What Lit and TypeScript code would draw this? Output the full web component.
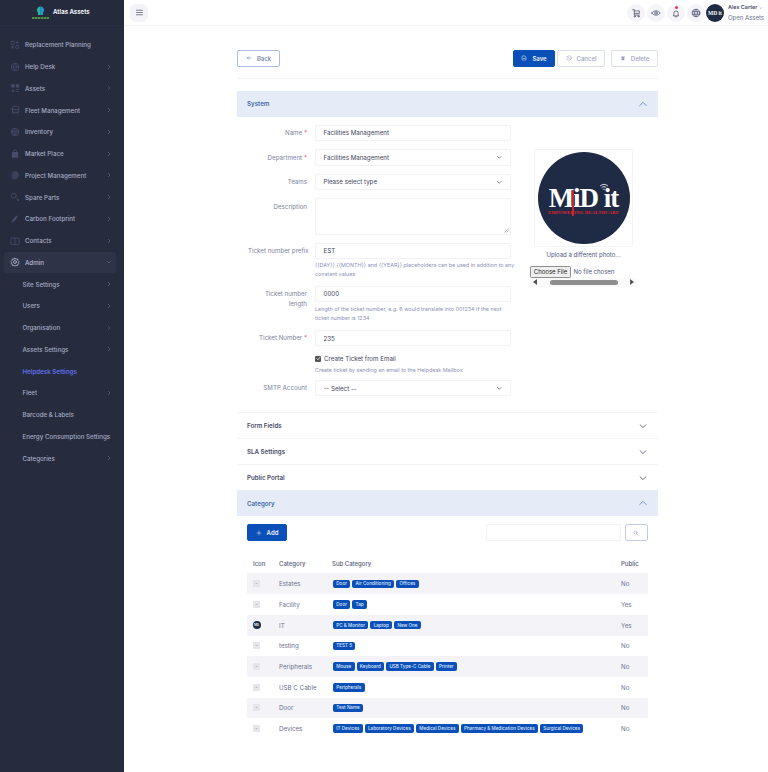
import { LitElement, html, css, svg } from 'lit';
import { customElement } from 'lit/decorators.js';

const ICONS: Record<string, unknown> = {
  planning: svg`<rect x="3" y="3" width="7" height="8" rx="2"/><rect x="14" y="13" width="7" height="8" rx="2"/><path d="M14 6h7M17 3v6M3 17h7M6 14v6"/>`,
  help: svg`<circle cx="12" cy="12" r="9"/><path d="M3 12h18M12 3c-5 5-5 13 0 18M12 3c5 5 5 13 0 18"/>`,
  assets: svg`<g fill="currentColor" stroke="none"><rect x="3" y="3" width="8" height="8" rx="1"/><rect x="14" y="3" width="8" height="8" rx="1"/><path d="M7 14l4 7H3zM14 15h8v2h-8zM14 19h8v2h-8z"/></g>`,
  fleet: svg`<path d="M6 18V6a3 3 0 0 1 3-3h9a3 3 0 0 1 3 3v10a2 2 0 0 1-2 2z" /><path d="M2 10h4M6 11h15"/><circle cx="9" cy="18" r="2"/><circle cx="18" cy="18" r="2"/>`,
  inventory: svg`<circle cx="12" cy="12" r="9"/><path d="M7 9l5-3 5 3v6l-5 3-5-3zM7 9l5 3 5-3M12 12v6"/>`,
  market: svg`<path fill="currentColor" stroke="none" d="M5 7h14l1 14H4z"/><path d="M8 9V6a4 4 0 0 1 8 0v3"/>`,
  project: svg`<path fill="currentColor" stroke="none" d="M9 3h7l5 5v9a2 2 0 0 1-2 2H9a2 2 0 0 1-2-2V5a2 2 0 0 1 2-2z" opacity=".7"/><path d="M5 7v12a2 2 0 0 0 2 2h9"/>`,
  spare: svg`<circle cx="9" cy="9" r="6"/><path d="M13 13l8 8M17 21l4-4"/>`,
  carbon: svg`<path fill="currentColor" stroke="none" d="M20 3c-8 2-14 8-16 17l1 1C9 18 17 12 20 3z"/>`,
  contacts: svg`<rect x="2" y="5" width="20" height="15" rx="1"/><path d="M12 5v15"/>`,
  admin: svg`<circle cx="12" cy="12" r="3.500"/><path d="M12 3l2.500 2 3.500-.5 1 3.500 2.500 2.500-1.500 2.500 1.500 2.500-2.500 1.500-1 3.500-3.500-.5-2.500 2-2.500-2-3.500.5-1-3.500-2.500-1.500 1.500-2.500-1.500-2.500 2.500-2.500 1-3.500 3.500.5z"/>`,
  cart: svg`<path d="M4 4h4v13h12M8 7h12v6H8"/><circle cx="9" cy="20" r="1.500"/><circle cx="18" cy="20" r="1.500"/>`,
  eye: svg`<path d="M2 12c4-7 16-7 20 0-4 7-16 7-20 0z"/><circle cx="12" cy="12" r="3"/>`,
  bell: svg`<path d="M6 18c1-2 1-3 1-6a5 5 0 0 1 10 0c0 3 0 4 1 6zM10 21h4"/>`,
  globe: svg`<circle cx="12" cy="12" r="9"/><path d="M3 9h18M3 15h18M12 3c-5 5-5 13 0 18M12 3c5 5 5 13 0 18"/>`,
  menu: svg`<path d="M4 6h16M4 12h16M4 18h16"/>`,
  back: svg`<path d="M20 12H5M10 7l-5 5 5 5"/>`,
  save: svg`<path d="M4 5a1 1 0 0 1 1-1h11l4 4v11a1 1 0 0 1-1 1H5a1 1 0 0 1-1-1z"/><path d="M8 14h8"/>`,
  cancel: svg`<circle cx="12" cy="12" r="9"/><path d="M6 6l12 12"/>`,
  trash: svg`<path fill="currentColor" stroke="none" d="M6 8h12l-1 13H7zM4 4h16v2H4z"/>`,
  plus: svg`<path d="M12 4v16M4 12h16"/>`,
  search: svg`<circle cx="10" cy="10" r="6"/><path d="M15 15l6 6"/>`,
  right: svg`<path d="M9 5l7 7-7 7"/>`,
  down: svg`<path d="M5 9l7 7 7-7"/>`,
  up: svg`<path d="M4 16l8-8 8 8"/>`,
  check: svg`<path d="M5 13l4 5L19 6"/>`,
};

const icon = (name: string, cls = '') =>
  html`<svg class="icon ${cls}" viewBox="0 0 24 24" fill="none" stroke="currentColor" stroke-width="2" stroke-linecap="round" stroke-linejoin="round">${ICONS[name]}</svg>`;

const NAV = [
  { label: 'Replacement Planning', icon: 'planning' },
  { label: 'Help Desk', icon: 'help', more: true },
  { label: 'Assets', icon: 'assets', more: true },
  { label: 'Fleet Management', icon: 'fleet', more: true },
  { label: 'Inventory', icon: 'inventory', more: true },
  { label: 'Market Place', icon: 'market', more: true },
  { label: 'Project Management', icon: 'project', more: true },
  { label: 'Spare Parts', icon: 'spare', more: true },
  { label: 'Carbon Footprint', icon: 'carbon', more: true },
  { label: 'Contacts', icon: 'contacts', more: true },
];

const SUBNAV = [
  { label: 'Site Settings', more: true },
  { label: 'Users', more: true },
  { label: 'Organisation', more: true },
  { label: 'Assets Settings', more: true },
  { label: 'Helpdesk Settings', active: true },
  { label: 'Fleet', more: true },
  { label: 'Barcode & Labels' },
  { label: 'Energy Consumption Settings' },
  { label: 'Categories', more: true },
];

const CATEGORIES = [
  { name: 'Estates', subs: ['Door', 'Air Conditioning', 'Offices'], pub: 'No' },
  { name: 'Facility', subs: ['Door', 'Tap'], pub: 'Yes' },
  { name: 'IT', subs: ['PC & Monitor', 'Laptop', 'New One'], pub: 'Yes', logo: true },
  { name: 'testing', subs: ['TEST 5'], pub: 'No' },
  { name: 'Peripherals', subs: ['Mouse', 'Keyboard', 'USB Type-C Cable', 'Printer'], pub: 'No' },
  { name: 'USB C Cable', subs: ['Peripherals'], pub: 'No' },
  { name: 'Door', subs: ['Test Name'], pub: 'No' },
  { name: 'Devices', subs: ['IT Devices', 'Laboratory Devices', 'Medical Devices', 'Pharmacy & Medication Devices', 'Surgical Devices'], pub: 'No' },
];

@customElement('app-root')
export class AppRoot extends LitElement {
  static styles = css`
    :host {
      display: grid;
      grid-template-columns: 124px 1fr;
      height: 772px;
      font-family: Inter, 'Liberation Sans', sans-serif;
      font-size: 6.2px;
      color: #4b4f6b;
      background: #fff;
      overflow: hidden;
    }
    .icon { width: 10px; height: 10px; flex: none; display: block; }

    /* sidebar */
    .sidebar { background: #262b3e; color: #a5abc4; }
    .brand {
      height: 26px;
      box-sizing: border-box;
      display: flex;
      align-items: center;
      padding: 0 0 2px 30px;
      gap: 2px;
      color: #eef0f6;
      font-weight: 700;
      font-size: 6px;
      background: #252a3c;
      border-bottom: 1px solid #2a2f43;
    }
    .brand svg { width: 21px; height: 14px; margin-top: 2px; }
    .nav { padding-top: 8px; }
    .item {
      height: 21.75px;
      margin: 0 8px 0 4px;
      display: flex;
      align-items: center;
      padding-left: 6px;
      font-weight: 500;
      border-radius: 3px;
    }
    .item .icon:first-child { width: 10px; height: 10px; margin-right: 5px; color: #464c6a; }
    .item .arrow { width: 6px; height: 6px; margin-left: auto; margin-right: 4px; color: #7a809c; }
    .item.open { background: #2e3347; color: #b8bdd2; }
    .item.open .icon:first-child { color: #b4b9cf; }
    .item.sub { padding-left: 18.5px; }
    .item.active { color: #5d6ee6; font-weight: 600; }

    /* topbar */
    .main { display: flex; flex-direction: column; min-width: 0; }
    .topbar {
      height: 26px;
      box-sizing: border-box;
      display: flex;
      align-items: center;
      padding: 0 4px 0 6px;
      border-bottom: 1px solid #f1f1f6;
    }
    .menu { width: 18px; height: 18px; border-radius: 6px; background: #f3f3f8; display: grid; place-items: center; color: #555a75; }
    .menu .icon { width: 9px; height: 9px; }
    .tools { margin-left: auto; display: flex; align-items: center; gap: 2px; }
    .round { width: 18px; height: 18px; border-radius: 50%; background: #f5f5f9; display: grid; place-items: center; color: #555a75; position: relative; }
    .round .icon { width: 10px; height: 10px; }
    .dot { position: absolute; top: 2.500px; left: 7.500px; width: 3px; height: 3px; border-radius: 50%; background: #f0334f; }
    .avatar { width: 18px; height: 18px; border-radius: 50%; background: #1f2a44; color: #fff; font: 700 5.500px 'Liberation Serif', serif; display: grid; place-items: center; overflow: hidden; margin-left: -1px; white-space: nowrap; }
    .who { margin-left: 2px; line-height: 9.500px; width: 36px; }
    .who b { font-weight: 600; font-size: 5.400px; color: #4b4f6b; display: flex; align-items: center; gap: 2px; }
    .who b .icon { width: 4px; height: 4px; }
    .who span { font-size: 6px; color: #6c7190; white-space: nowrap; }

    /* page */
    .page { width: 421px; margin: 0 0 0 113px; padding-top: 23.500px; }
    .actions { display: flex; gap: 2px; padding-bottom: 11px; border-bottom: 1px solid #f1f1f6; margin-bottom: 12px; }
    .btn {
      height: 17px;
      box-sizing: border-box;
      border: 1px solid #c9d3ea;
      border-radius: 2px;
      display: inline-flex;
      align-items: center;
      justify-content: center;
      gap: 5px;
      font-size: 6px;
      font-weight: 500;
      color: #9a9fbb;
      background: #fff;
    }
    .btn .icon { width: 6px; height: 6px; }
    .btn.back { width: 43px; color: #6d7ba6; border-color: #a9bde0; margin-right: auto; }
    .btn.back .icon { color: #3f68b4; }
    .btn.save { width: 42px; background: #0b4fb8; border-color: #0b4fb8; color: #eef3fb; font-weight: 600; }
    .btn.cancel { width: 48px; border-color: #dcdfee; }
    .btn.delete { width: 47px; margin-left: 4px; border-color: #dcdfee; }
    .btn.add { width: 40px; background: #0b4fb8; border-color: #0b4fb8; color: #eef3fb; font-weight: 600; }
    .btn.find { width: 23.500px; border-color: #c2cce6; color: #8f99bf; }

    .acc {
      height: 26px;
      box-sizing: border-box;
      display: flex;
      align-items: center;
      justify-content: space-between;
      padding: 0 10px;
      font-weight: 600;
      font-size: 6.200px;
      color: #474b68;
      border-top: 1px solid #f3f3f8;
    }
    .acc .icon { width: 10px; height: 10px; stroke-width: 2; color: #50577f; }
    .acc.open { background: #e6ecf7; color: #4468a8; border-top: 0; }
    .acc.open .icon { color: #5a7fbe; }

    /* form */
    .system { display: flex; padding: 8px 0 16px 11px; }
    .form { width: 263px; display: flex; flex-direction: column; gap: 8px; }
    .row { display: grid; grid-template-columns: 59px 196px; column-gap: 8px; }
    .label { text-align: right; color: #7d82a0; line-height: 9.500px; padding-top: 3.500px; white-space: nowrap; }
    .label i { color: #ef4a5f; font-style: normal; }
    .field {
      height: 16.500px;
      box-sizing: border-box;
      border: 1px solid #f1f1f6;
      border-radius: 2px;
      display: flex;
      align-items: center;
      justify-content: space-between;
      padding: 0 7.500px;
      color: #3f4360;
      background: #fff;
    }
    .field .icon { width: 6.500px; height: 6.500px; stroke-width: 2.500; color: #50577f; }
    .area { height: 36.500px; position: relative; }
    .grip { position: absolute; right: 1px; bottom: 1px; width: 5px; height: 5px; color: #777; }
    .help { grid-column: 2; color: #8d92b8; font-size: 5.400px; line-height: 9.600px; margin-top: 1.500px; margin-bottom: -2px; }
    .help.two { margin-top: -3.500px; }
    .help.mail { margin-top: 1.500px; margin-bottom: -3.500px; }
    .nowrap { white-space: nowrap; }
    .check { grid-column: 2; display: flex; align-items: center; gap: 3px; height: 11px; margin-top: -1px; color: #3f4360; }
    .box { width: 6px; height: 6px; background: #555; border-radius: 1px; display: grid; place-items: center; color: #fff; }
    .box .icon { width: 5px; height: 5px; stroke-width: 3.500; }

    .photo { margin-left: 19px; width: 107px; display: flex; flex-direction: column; padding-top: 24px; }
    .frame { width: 99px; height: 98px; margin-left: 4px; box-sizing: border-box; border: 1px solid #f3f3f8; border-radius: 2px; display: grid; place-items: center; }
    .logo { width: 92px; height: 92px; box-sizing: border-box; padding-top: 6px; border-radius: 50%; background: #1f2a44; color: #fff; display: flex; flex-direction: column; align-items: center; justify-content: center; position: relative; }
    .logo b { font: 700 27px/24px 'Liberation Serif', serif; letter-spacing: -1px; }
    .logo small { font: 700 4.600px/6px 'Liberation Serif', serif; color: #e0262c; letter-spacing: .2px; white-space: nowrap; }
    .logo svg { position: absolute; top: 31px; right: 21px; width: 10px; height: 8px; color: #fff; }
    .logo .rod { position: absolute; left: 34px; top: 38px; width: 2px; height: 26px; background: #d2232a; }
    .caption { text-align: center; margin-top: 4.500px; color: #4f5680; font-size: 6px; line-height: 8px; }
    .file { display: flex; align-items: center; gap: 2.500px; margin-top: 6.500px; font-size: 6px; color: #4f5680; }
    .choose { width: 41px; height: 12px; box-sizing: border-box; background: #efefef; border: 1px solid #8f8f8f; border-radius: 1.500px; color: #222; display: grid; place-items: center; }
    .bar { height: 9px; background: #fafafa; display: flex; align-items: center; justify-content: space-between; padding: 0 3px; color: #555; }
    .thumb { width: 68px; height: 5px; border-radius: 3px; background: #8e8e8e; }
    .tri-l { width: 0; height: 0; border: 3px solid transparent; border-right: 4px solid #555; border-left: 0; }
    .tri-r { width: 0; height: 0; border: 3px solid transparent; border-left: 4px solid #555; border-right: 0; }

    /* category */
    .category { padding: 8px 10px 0; }
    .tools-row { display: flex; align-items: center; }
    .search { width: 135px; height: 17px; box-sizing: border-box; border: 1px solid #f1f1f6; border-radius: 2px; margin-left: auto; margin-right: 3.500px; }
    .cols { display: grid; grid-template-columns: 32px 53px 289px 27px; align-items: center; }
    .head { height: 32px; padding-top: 12px; box-sizing: border-box; color: #555a78; font-weight: 500; font-size: 6px; }
    .head span:first-child, .line > :first-child { padding-left: 6px; }
    .line { height: 20.700px; color: #6b708e; }
    .line:nth-child(odd) { background: #f3f3f8; }
    .blank { width: 7px; height: 7px; background: #e6e6ea; display: grid; place-items: center; color: #777; font-size: 5px; line-height: 1; }
    .mini { width: 8px; height: 8px; border-radius: 50%; background: #1f2a44; color: #fff; font: 700 3px 'Liberation Serif', serif; display: grid; place-items: center; margin-left: -.500px; }
    .badges { display: flex; gap: 2px; padding-left: 1px; }
    .badge { height: 8.500px; padding: 0 3.300px; display: flex; align-items: center; background: #0b4fb8; color: #dfe8f8; border-radius: 2px; font-size: 4.600px; font-weight: 500; white-space: nowrap; }
  `;

  render() {
    return html`
      <aside class="sidebar">
        <div class="brand">
          <svg viewBox="0 0 42 28">
            <path d="M21 1a7 7 0 0 1 5 12v5h-5z" fill="#1f9bd0"/>
            <path d="M21 1a7 7 0 0 0-5 12v5h5z" fill="#22b6a0"/>
            <path d="M4 24h34" stroke="#5fb548" stroke-width="3" stroke-dasharray="5 1"/>
          </svg>
          <span>Atlas Assets</span>
        </div>
        <nav class="nav">
          ${NAV.map((n) => html`
            <div class="item">${icon(n.icon)}<span>${n.label}</span>${n.more ? icon('right', 'arrow') : ''}</div>
          `)}
          <div class="item open">${icon('admin')}<span>Admin</span>${icon('down', 'arrow')}</div>
          ${SUBNAV.map((n) => html`
            <div class="item sub ${n.active ? 'active' : ''}"><span>${n.label}</span>${n.more ? icon('right', 'arrow') : ''}</div>
          `)}
        </nav>
      </aside>
      <div class="main">
        <header class="topbar">
          <div class="menu">${icon('menu')}</div>
          <div class="tools">
            <div class="round">${icon('cart')}</div>
            <div class="round">${icon('eye')}</div>
            <div class="round">${icon('bell')}<span class="dot"></span></div>
            <div class="round">${icon('globe')}</div>
            <div class="avatar">MD it</div>
            <div class="who"><b>Alex Carter ${icon('down')}</b><span>Open Assets</span></div>
          </div>
        </header>
        <div class="page">
          <div class="actions">
            <div class="btn back">${icon('back')}Back</div>
            <div class="btn save">${icon('save')}Save</div>
            <div class="btn cancel">${icon('cancel')}Cancel</div>
            <div class="btn delete">${icon('trash')}Delete</div>
          </div>
          <div class="acc open">System ${icon('up')}</div>
          <div class="system">
            ${this.renderForm()}
            ${this.renderPhoto()}
          </div>
          <div class="acc">Form Fields ${icon('down')}</div>
          <div class="acc">SLA Settings ${icon('down')}</div>
          <div class="acc">Public Portal ${icon('down')}</div>
          <div class="acc open">Category ${icon('up')}</div>
          <div class="category">
            <div class="tools-row">
              <div class="btn add">${icon('plus')}Add</div>
              <div class="search"></div>
              <div class="btn find">${icon('search')}</div>
            </div>
            <div class="cols head"><span>Icon</span><span>Category</span><span>Sub Category</span><span>Public</span></div>
            <div>
              ${CATEGORIES.map((c) => html`
                <div class="cols line">
                  <div>${c.logo ? html`<div class="mini">MD</div>` : html`<div class="blank">-</div>`}</div>
                  <div>${c.name}</div>
                  <div class="badges">${c.subs.map((s) => html`<span class="badge">${s}</span>`)}</div>
                  <div>${c.pub}</div>
                </div>
              `)}
            </div>
          </div>
        </div>
      </div>
    `;
  }

  private renderForm() {
    return html`
      <div class="form">
        <div class="row"><div class="label">Name <i>*</i></div><div class="field">Facilities Management</div></div>
        <div class="row"><div class="label">Department <i>*</i></div><div class="field">Facilities Management ${icon('down')}</div></div>
        <div class="row"><div class="label">Teams</div><div class="field">Please select type ${icon('down')}</div></div>
        <div class="row">
          <div class="label">Description</div>
          <div class="field area"><svg class="grip" viewBox="0 0 10 10" stroke="currentColor" fill="none"><path d="M1 9l8-8M5 9l4-4"/></svg></div>
        </div>
        <div class="row">
          <div class="label">Ticket number prefix</div><div class="field">EST</div>
          <div class="help nowrap">{{DAY}} {{MONTH}} and {{YEAR}} placeholders can be used in addition to any<br />constant values</div>
        </div>
        <div class="row">
          <div class="label">Ticket number<br />length</div>
          <div class="field">0000</div>
          <div class="help two">Length of the ticket number, e.g. 6 would translate into 001234 if the next ticket number is 1234</div>
        </div>
        <div class="row"><div class="label">Ticket Number <i>*</i></div><div class="field">235</div></div>
        <div class="row">
          <div class="check"><span class="box">${icon('check')}</span>Create Ticket from Email</div>
          <div class="help mail">Create ticket by sending an email to the Helpdesk Mailbox</div>
        </div>
        <div class="row"><div class="label">SMTP Account</div><div class="field">-- Select -- ${icon('down')}</div></div>
      </div>
    `;
  }

  private renderPhoto() {
    return html`
      <div class="photo">
        <div class="frame">
          <div class="logo">
            <b>MiD it</b>
            <small>EMPOWERING HEALTHCARE</small>
            <span class="rod"></span>
            <svg viewBox="0 0 24 20" fill="none" stroke="currentColor" stroke-width="2"><path d="M2 8c6-6 14-6 20 0M6 12c4-4 8-4 12 0M10 16c1-1 3-1 4 0"/></svg>
          </div>
        </div>
        <div class="caption">Upload a different photo...</div>
        <div class="file"><span class="choose">Choose File</span>No file chosen</div>
        <div class="bar"><span class="tri-l"></span><span class="thumb"></span><span class="tri-r"></span></div>
      </div>
    `;
  }
}
